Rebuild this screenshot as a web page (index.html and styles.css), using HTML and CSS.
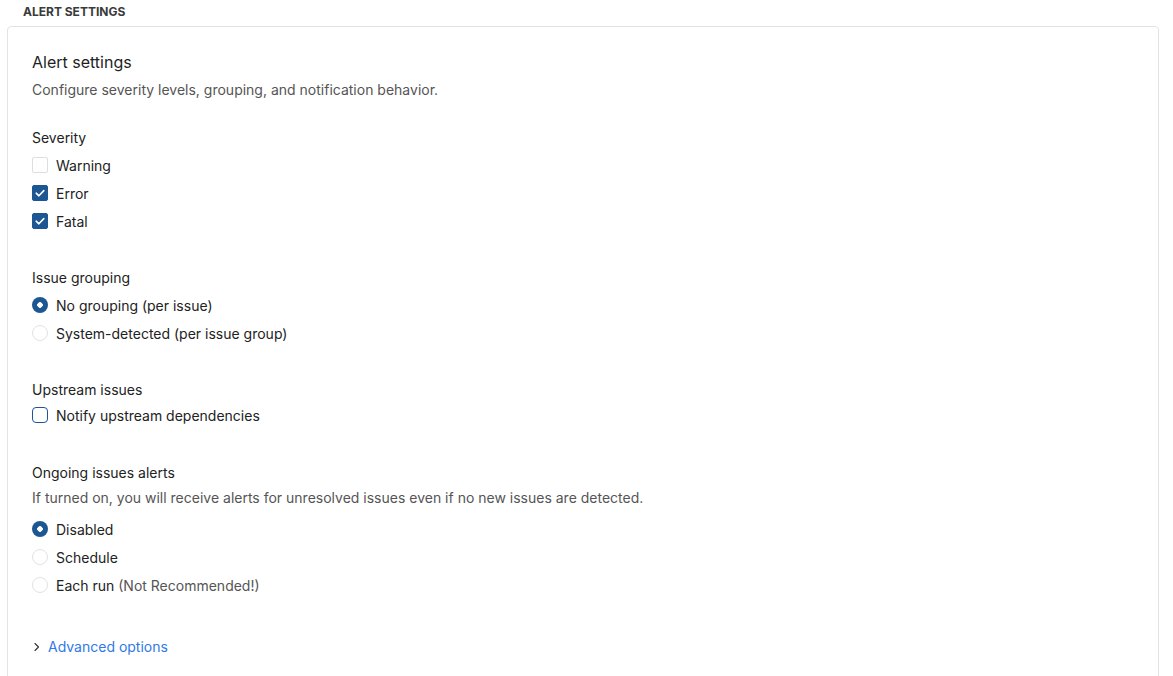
FILE: index.html
```html
<!DOCTYPE html>
<html lang="en">
<head>
<meta charset="utf-8">
<title>Alert settings</title>
<link rel="stylesheet" href="styles.css">
</head>
<body>
<div class="page">
  <div class="section-label">ALERT SETTINGS</div>
  <div class="card">
    <h2 class="title">Alert settings</h2>
    <p class="desc">Configure severity levels, grouping, and notification behavior.</p>

    <div class="group first">
      <div class="group-label">Severity</div>
      <label class="row"><span class="box"></span><span>Warning</span></label>
      <label class="row"><span class="box checked"><svg viewBox="0 0 16 16" width="16" height="16"><path d="M4.2 8.2 L6.9 10.8 L11.8 5.6" fill="none" stroke="#fff" stroke-width="1.6" stroke-linecap="round" stroke-linejoin="round"/></svg></span><span>Error</span></label>
      <label class="row"><span class="box checked"><svg viewBox="0 0 16 16" width="16" height="16"><path d="M4.2 8.2 L6.9 10.8 L11.8 5.6" fill="none" stroke="#fff" stroke-width="1.6" stroke-linecap="round" stroke-linejoin="round"/></svg></span><span>Fatal</span></label>
    </div>

    <div class="group">
      <div class="group-label">Issue grouping</div>
      <label class="row"><span class="radio on"></span><span>No grouping (per issue)</span></label>
      <label class="row"><span class="radio"></span><span>System-detected (per issue group)</span></label>
    </div>

    <div class="group">
      <div class="group-label">Upstream issues</div>
      <label class="row tight"><span class="box focus"></span><span>Notify upstream dependencies</span></label>
    </div>

    <div class="group after-tight">
      <div class="group-label">Ongoing issues alerts</div>
      <p class="hint">If turned on, you will receive alerts for unresolved issues even if no new issues are detected.</p>
      <div class="radios">
        <label class="row"><span class="radio on"></span><span>Disabled</span></label>
        <label class="row"><span class="radio"></span><span>Schedule</span></label>
        <label class="row"><span class="radio"></span><span>Each run <span class="muted">(Not Recommended!)</span></span></label>
      </div>
    </div>

    <div class="advanced">
      <svg class="chev" viewBox="0 0 8 10" width="8" height="10"><path d="M2 1.5 L5.5 5 L2 8.5" fill="none" stroke="#333" stroke-width="1.1" stroke-linecap="round" stroke-linejoin="round"/></svg>
      <a class="link" href="#">Advanced options</a>
    </div>
  </div>
</div>
</body>
</html>
```

FILE: styles.css
```css
* { box-sizing: border-box; }
html, body { margin: 0; padding: 0; background: #fff; }
body {
  font-family: Inter, "Noto Sans", "Liberation Sans", sans-serif;
  color: #222;
  font-size: 14px;
  line-height: 20px;
}
.page {
  padding: 0 14px 0 7px;
}
.section-label {
  padding-left: 16px;
  font-size: 12px;
  font-weight: 700;
  color: #3a3a3a;
  height: 26px;
  line-height: 23px;
}
.card {
  border: 1px solid #e3e3e3;
  border-radius: 4px;
  padding: 24px 24px 40px 24px;
  min-height: 700px;
}
.title {
  margin: 0;
  font-size: 16px;
  font-weight: 400;
  line-height: 22px;
  color: #1f1f1f;
}
.desc {
  margin: 7px 0 0 0;
  color: #555;
  font-size: 14px;
  line-height: 20px;
}
.group { margin-top: 32px; }
.group.first { margin-top: 28px; }
.group.after-tight { margin-top: 34px; }
.group-label {
  font-size: 14px;
  line-height: 20px;
  color: #222;
  margin-bottom: 4px;
}
.row {
  display: flex;
  align-items: center;
  gap: 8px;
  height: 28px;
  font-size: 14px;
  color: #222;
}
.row.tight { height: 26px; margin-top: -1px; }
.box {
  width: 16px;
  height: 16px;
  border: 1px solid #dedede;
  border-radius: 2px;
  flex: none;
  display: flex;
  background: #fff;
  margin-bottom: 2px;
}
.box.checked {
  background: #1c5793;
  border-color: #1c5793;
}
.box.checked svg { margin: -1px; }
.box.focus {
  border: 1.5px solid #1c5793;
  border-radius: 4px;
}
.radio {
  width: 16px;
  height: 16px;
  border-radius: 50%;
  border: 1px solid #e2e2e2;
  flex: none;
  background: #fff;
  margin-bottom: 2px;
}
.radio.on {
  border: none;
  background: radial-gradient(circle, #fff 0 2.5px, #1c5793 3px);
}
.hint {
  margin: 5px 0 0 0;
  color: #555;
  font-size: 14px;
  line-height: 20px;
}
.radios { margin-top: 8px; }
.muted { color: #555; }
.advanced {
  margin-top: 37px;
  display: flex;
  align-items: center;
  gap: 7px;
  padding-left: 1px;
  height: 20px;
}
.chev { flex: none; }
.link {
  color: #2f7ae5;
  text-decoration: none;
  font-size: 14px;
}
```
